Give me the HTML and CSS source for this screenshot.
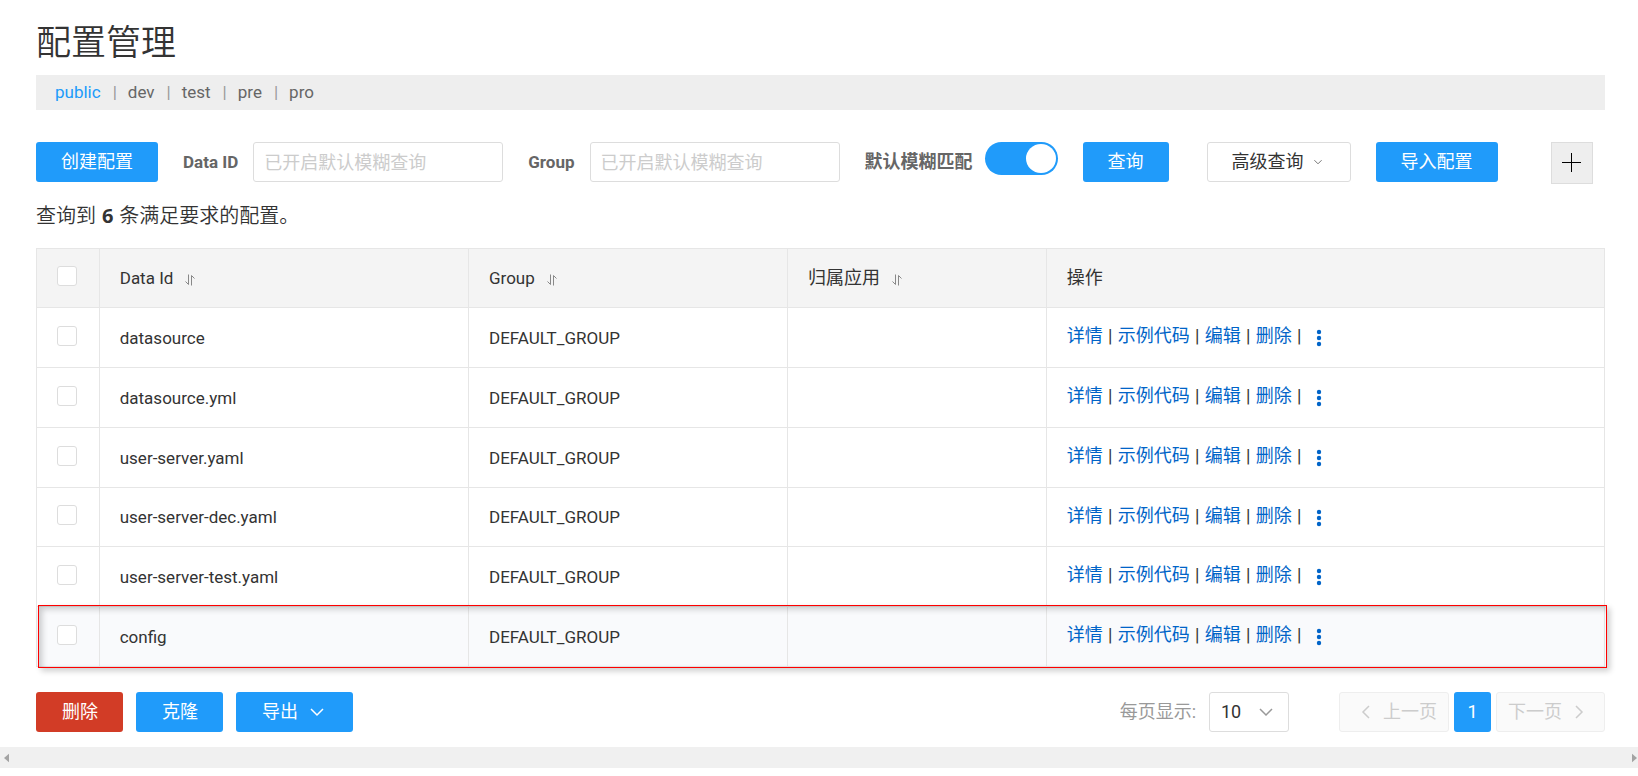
FILE: index.html
```html
<!DOCTYPE html>
<html lang="zh-CN">
<head>
<meta charset="utf-8">
<title>配置管理</title>
<link rel="stylesheet" href="styles.css">
</head>
<body>
<svg class="sprite" aria-hidden="true">
  <symbol id="sort" viewBox="0 0 10 12"><path d="M3.500 .5v10L.5 7.500M6.500 11.500V1.500l3 3" fill="none" stroke="currentColor"/></symbol>
  <symbol id="down" viewBox="0 0 16 10"><path d="M2 2l6 6 6-6" fill="none" stroke="currentColor" stroke-width="1.500"/></symbol>
  <symbol id="left" viewBox="0 0 10 16"><path d="M8 2L2 8l6 6" fill="none" stroke="currentColor" stroke-width="1.500"/></symbol>
  <symbol id="right" viewBox="0 0 10 16"><path d="M2 2l6 6-6 6" fill="none" stroke="currentColor" stroke-width="1.500"/></symbol>
  <symbol id="more" viewBox="0 0 6 18"><circle cx="3" cy="3" r="2.200"/><circle cx="3" cy="9" r="2.200"/><circle cx="3" cy="15" r="2.200"/></symbol>
</svg>
<main class="page">
  <h1 class="title">配置管理</h1>
  <nav class="namespaces">
    <a class="active" href="#">public</a><span>|</span><a href="#">dev</a><span>|</span><a href="#">test</a><span>|</span><a href="#">pre</a><span>|</span><a href="#">pro</a>
  </nav>

  <form class="toolbar">
    <button class="btn primary" type="button">创建配置</button>
    <div class="field"><label for="data-id">Data ID</label><input id="data-id" class="text" type="text" placeholder="已开启默认模糊查询"></div>
    <div class="field"><label for="group">Group</label><input id="group" class="text" type="text" placeholder="已开启默认模糊查询"></div>
    <div class="field toggle"><label for="fuzzy">默认模糊匹配</label><input id="fuzzy" class="switch" type="checkbox" role="switch" checked></div>
    <button class="btn primary" type="button">查询</button>
    <button class="btn normal advanced" type="button">高级查询<svg class="chev-s"><use href="#down"/></svg></button>
    <button class="btn primary" type="button">导入配置</button>
    <button class="add" type="button" aria-label="新建"><svg viewBox="0 0 20 20"><path d="M9.500 0v19M0 9.500h19" stroke="#000" stroke-width="1"/></svg></button>
  </form>

  <p class="summary">查询到 <strong>6</strong> 条满足要求的配置。</p>

  <div class="table-wrap">
    <table class="grid">
      <colgroup><col class="c-check"><col class="c-id"><col class="c-group"><col class="c-app"><col></colgroup>
      <thead>
        <tr><th class="pick"><input type="checkbox" aria-label="全选"></th><th>Data Id<svg class="sort"><use href="#sort"/></svg></th><th>Group<svg class="sort"><use href="#sort"/></svg></th><th class="zh">归属应用<svg class="sort"><use href="#sort"/></svg></th><th class="zh">操作</th></tr>
      </thead>
      <tbody>
        <tr><td class="pick"><input type="checkbox" aria-label="datasource"></td><td>datasource</td><td>DEFAULT_GROUP</td><td></td><td><div class="ops"><a href="#">详情</a><i>|</i><a href="#">示例代码</a><i>|</i><a href="#">编辑</a><i>|</i><a href="#">删除</a><i>|</i><a href="#" aria-label="更多"><svg class="more"><use href="#more"/></svg></a></div></td></tr>
        <tr><td class="pick"><input type="checkbox" aria-label="datasource.yml"></td><td>datasource.yml</td><td>DEFAULT_GROUP</td><td></td><td><div class="ops"><a href="#">详情</a><i>|</i><a href="#">示例代码</a><i>|</i><a href="#">编辑</a><i>|</i><a href="#">删除</a><i>|</i><a href="#" aria-label="更多"><svg class="more"><use href="#more"/></svg></a></div></td></tr>
        <tr><td class="pick"><input type="checkbox" aria-label="user-server.yaml"></td><td>user-server.yaml</td><td>DEFAULT_GROUP</td><td></td><td><div class="ops"><a href="#">详情</a><i>|</i><a href="#">示例代码</a><i>|</i><a href="#">编辑</a><i>|</i><a href="#">删除</a><i>|</i><a href="#" aria-label="更多"><svg class="more"><use href="#more"/></svg></a></div></td></tr>
        <tr><td class="pick"><input type="checkbox" aria-label="user-server-dec.yaml"></td><td>user-server-dec.yaml</td><td>DEFAULT_GROUP</td><td></td><td><div class="ops"><a href="#">详情</a><i>|</i><a href="#">示例代码</a><i>|</i><a href="#">编辑</a><i>|</i><a href="#">删除</a><i>|</i><a href="#" aria-label="更多"><svg class="more"><use href="#more"/></svg></a></div></td></tr>
        <tr><td class="pick"><input type="checkbox" aria-label="user-server-test.yaml"></td><td>user-server-test.yaml</td><td>DEFAULT_GROUP</td><td></td><td><div class="ops"><a href="#">详情</a><i>|</i><a href="#">示例代码</a><i>|</i><a href="#">编辑</a><i>|</i><a href="#">删除</a><i>|</i><a href="#" aria-label="更多"><svg class="more"><use href="#more"/></svg></a></div></td></tr>
        <tr class="hover"><td class="pick"><input type="checkbox" aria-label="config"></td><td>config</td><td>DEFAULT_GROUP</td><td></td><td><div class="ops"><a href="#">详情</a><i>|</i><a href="#">示例代码</a><i>|</i><a href="#">编辑</a><i>|</i><a href="#">删除</a><i>|</i><a href="#" aria-label="更多"><svg class="more"><use href="#more"/></svg></a></div></td></tr>
      </tbody>
    </table>
    <div class="marker"></div>
  </div>

  <footer class="footer">
    <div class="batch">
      <button class="btn danger" type="button">删除</button>
      <button class="btn primary" type="button">克隆</button>
      <button class="btn primary export" type="button">导出<svg class="chev"><use href="#down"/></svg></button>
    </div>
    <div class="pager">
      <label for="size">每页显示:</label>
      <div class="select"><select id="size"><option>10</option></select><svg class="chev"><use href="#down"/></svg></div>
      <div class="pages">
        <button class="btn off prev" type="button" disabled><svg class="arrow"><use href="#left"/></svg>上一页</button>
        <button class="btn primary num" type="button">1</button>
        <button class="btn off next" type="button" disabled>下一页<svg class="arrow"><use href="#right"/></svg></button>
      </div>
    </div>
  </footer>
</main>
<div class="scrollbar" aria-hidden="true"><svg viewBox="0 0 6 10"><path d="M6 0v10L0 5z"/></svg><svg viewBox="0 0 6 10"><path d="M0 0v10l6-5z"/></svg></div>
</body>
</html>
```
FILE: styles.css
```css
* { box-sizing: border-box; }
body {
  margin: 0;
  background: #fff;
  color: #333;
  font: 17px/24px Roboto, "Noto Sans CJK SC", sans-serif;
}
a { text-decoration: none; }
button, input, select { font: inherit; margin: 0; }
.sprite { display: none; }
.page { padding: 18px 33px 15px 36px; }
.title { margin: 0 0 5px; font-size: 35px; line-height: 52px; font-weight: 350; }

.namespaces {
  display: flex;
  height: 35px;
  padding: 0 0 2px 19px;
  align-items: center;
  background: #eee;
}
.namespaces a { color: #666; }
.namespaces .active { color: #209bfa; }
.namespaces span { margin: 0 11px 0 12px; color: #999; }

.toolbar { display: flex; align-items: flex-start; gap: 25px; margin-top: 32px; }
.btn {
  display: flex;
  height: 40px;
  padding: 0 24px;
  align-items: center;
  justify-content: center;
  border: 1px solid transparent;
  border-radius: 3px;
  white-space: nowrap;
  font-size: 18px;
}
.primary { background: #209bfa; color: #fff; }
.danger { background: #d23c26; color: #fff; }
.normal { background: #fff; border-color: #ddd; color: #333; }
.advanced { margin-left: 13px; padding-right: 27px; }
.off { background: #fafafa; border-color: #eee; color: #ccc; }
.field { display: flex; align-items: flex-start; gap: 15px; }
.field label { line-height: 40px; font-weight: 700; color: #666; white-space: nowrap; }
.toggle { gap: 12px; }
.field.toggle label { font-size: 18px; }
.text {
  width: 250px;
  height: 40px;
  padding: 0 10px;
  border: 1px solid #ddd;
  border-radius: 3px;
  font-size: 18px;
}
.text::placeholder { color: #ccc; opacity: 1; }
.switch {
  display: flex;
  width: 73px;
  height: 33px;
  padding: 2px;
  appearance: none;
  justify-content: flex-end;
  border-radius: 17px;
  background: #209bfa;
}
.switch::before { content: ""; width: 30px; height: 29px; border-radius: 50%; background: #fff; }
.chev-s { width: 10px; height: 6px; margin-left: 9px; color: #666; }
.add {
  display: flex;
  width: 42px;
  height: 42px;
  margin: 0 12px 0 auto;
  padding: 0;
  align-items: center;
  justify-content: center;
  border: 1px solid #ddd;
  background: #eee;
}
.add svg { width: 20px; height: 20px; }

.summary { margin: 18px 0; font-size: 20px; line-height: 28px; font-weight: 350; }
.summary strong { margin: 0 1px; font-family: "Open Sans", sans-serif; font-weight: 700; }

.table-wrap { position: relative; }
.grid { width: 100%; table-layout: fixed; border-collapse: collapse; }
.c-check { width: 4%; }
.c-id { width: 23.550%; }
.c-group { width: 20.350%; }
.c-app { width: 16.500%; }
.grid th, .grid td { height: 60px; padding: 0 20px; border: 1px solid #e6e6e6; text-align: left; }
.grid th { height: 59px; background: #f4f4f4; font-weight: 400; }
.grid tr:nth-child(4) td { height: 59px; }
.grid .zh { font-size: 18px; }
.grid .pick { padding-bottom: 4px; }
.pick input {
  display: block;
  width: 20px;
  height: 20px;
  appearance: none;
  border: 1px solid #ddd;
  border-radius: 3px;
  background: #fff;
}
.sort { width: 10px; height: 12px; margin-left: 12px; vertical-align: -2px; color: #888; }
.hover { background: #f9fafc; }
.ops { display: flex; align-items: center; padding-bottom: 3px; font-size: 18px; }
.ops a { color: #0064c8; }
.ops i { width: 15px; text-align: center; font-style: normal; }
.more { display: block; width: 6px; height: 18px; margin: 4px 0 0 9px; fill: #0064c8; }
.marker {
  position: absolute;
  left: 2px;
  right: -2px;
  bottom: -1px;
  height: 63px;
  border: 1px solid #f00;
  box-shadow: 3px 3px 6px rgba(0, 0, 0, .2), inset 3px 3px 6px rgba(0, 0, 0, .2);
  pointer-events: none;
}

.footer { display: flex; justify-content: space-between; margin-top: 25px; }
.batch { display: flex; gap: 13px; }
.batch .btn { padding: 0 24px 0 25px; }
.chev { width: 16px; height: 10px; margin-left: 11px; }
.batch .export { padding-right: 27px; }
.pager { display: flex; align-items: center; color: #999; font-size: 18px; }
.select { display: flex; position: relative; margin: 0 50px 0 13px; align-items: center; }
.select select {
  width: 80px;
  height: 40px;
  padding: 0 11px;
  appearance: none;
  border: 1px solid #ddd;
  border-radius: 3px;
  background: #fff;
  color: #333;
  font-size: 18px;
}
.select .chev { position: absolute; right: 15px; pointer-events: none; }
.pages { display: flex; gap: 5px; }
.pages .off { gap: 12px; }
.pages .prev { padding: 0 11px 0 21px; }
.pages .next { padding: 0 20px 0 11px; }
.pages .num { width: 37px; padding: 0; }
.arrow { width: 10px; height: 16px; }

.scrollbar {
  display: flex;
  height: 21px;
  padding: 0 1px 0 4px;
  align-items: center;
  justify-content: space-between;
  background: #f0f0f0;
}
.scrollbar svg { width: 5px; height: 10px; fill: #a3a3a3; }
```
